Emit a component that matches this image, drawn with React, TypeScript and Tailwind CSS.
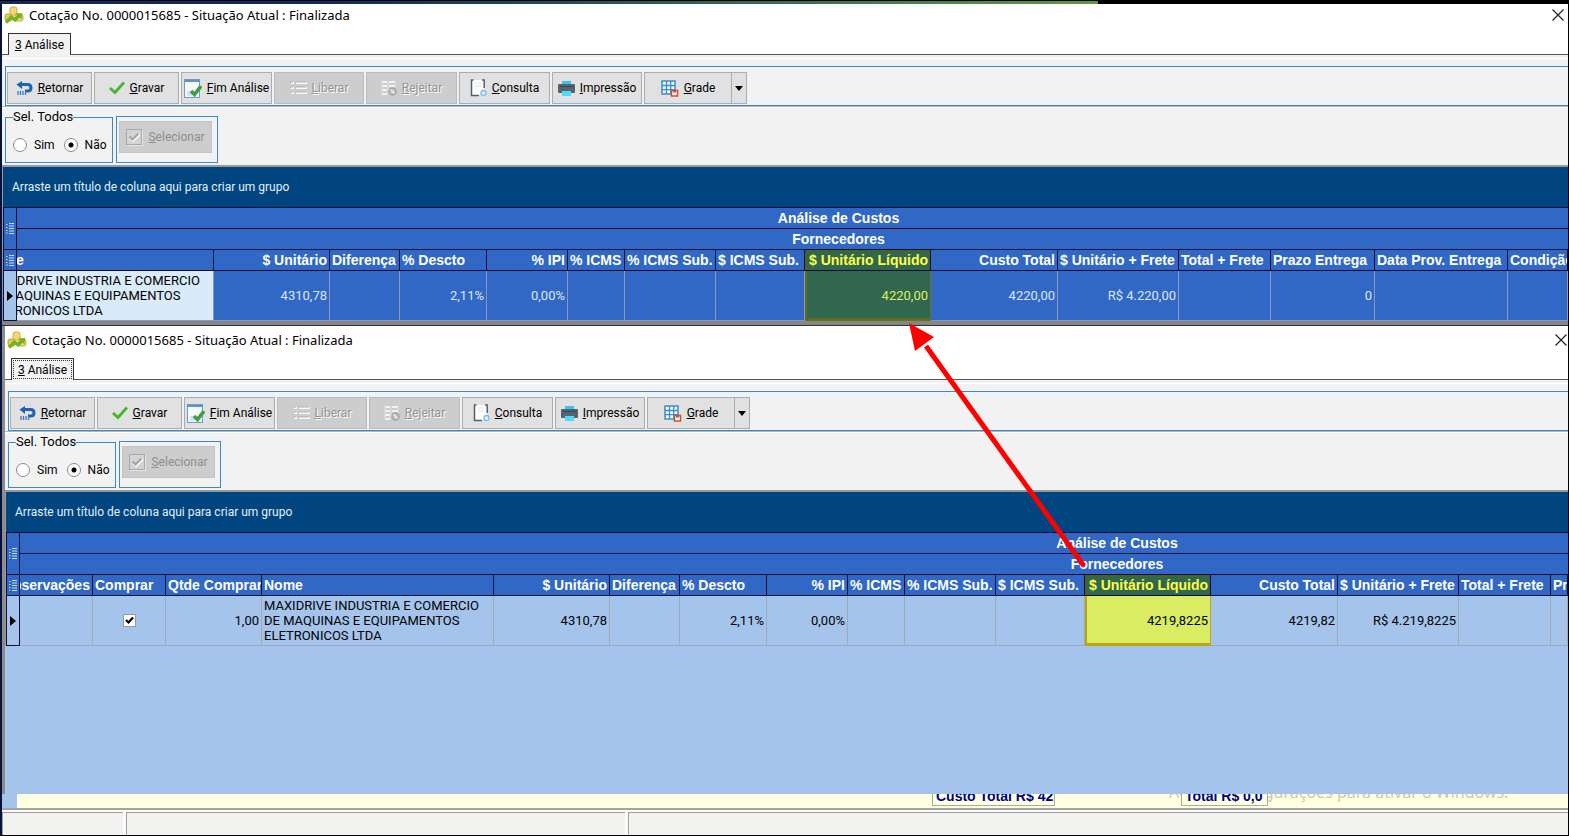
import type { ReactNode } from 'react'

const COMPANY = ['MAXIDRIVE INDUSTRIA E COMERCIO', 'DE MAQUINAS E EQUIPAMENTOS', 'ELETRONICOS LTDA']

/* ---------- Icons ---------- */

const AppIcon = () => (
  <svg width="20" height="20" viewBox="0 0 20 20" className="mt-px">
    <rect x="6" y="2" width="7" height="8" rx="2" fill="#f0d873" stroke="#cdaa48" />
    <rect x="1" y="9" width="7" height="7" rx="2" fill="#e6c75c" stroke="#c4a23c" />
    <rect x="11" y="9" width="8" height="7" rx="2" fill="#f0d873" stroke="#cdaa48" />
    <path d="M2 17.500L7.500 12L11 15L15 10.500" fill="none" stroke="#74b41e" strokeWidth="3.400" strokeLinejoin="round" />
    <path d="M11.500 8.500L18 8L17.500 14.500Z" fill="#74b41e" />
  </svg>
)

const CloseIcon = () => (
  <svg width="12" height="12" viewBox="0 0 12 12">
    <path d="M0.500 0.500L11.500 11.500M11.500 0.500L0.500 11.500" stroke="#222" strokeWidth="1.200" />
  </svg>
)

const BackIcon = () => (
  <svg width="17" height="14" viewBox="0 0 17 14">
    <path d="M4 3.500H11.500Q15 3.500 15 7Q15 10 11.500 10H9" fill="none" stroke="#1f62b4" strokeWidth="3" />
    <path d="M6 0L0.500 3.500L6 8Z" fill="#1f62b4" />
    <path d="M2 10V14M4.500 10V14M7 10V14M9.500 10V14" stroke="#3c79c4" strokeWidth="1.300" />
  </svg>
)

const CheckIcon = () => (
  <svg width="16" height="14" viewBox="0 0 16 14">
    <path d="M1 7L6 11.500L15 1.500" fill="none" stroke="#45b52c" strokeWidth="2.800" />
  </svg>
)

const FinishIcon = () => (
  <svg width="18" height="19" viewBox="0 0 18 19">
    <rect x="0.500" y="0.500" width="15" height="18" fill="#f5f9fd" stroke="#6d9ccc" />
    <rect x="1" y="1" width="14" height="2" fill="#5b94d0" />
    <path d="M3 12H8V17H3Z" fill="#d3e1f0" />
    <path d="M7 12L10.500 15.500L17 7" fill="none" stroke="#3f9d45" strokeWidth="3.600" />
  </svg>
)

const ListIcon = () => (
  <svg width="17" height="14" viewBox="0 0 17 14">
    <path d="M1 2H4M6 2H17M1 7H4M6 7H17M1 12H4M6 12H17" stroke="#fafafa" strokeWidth="2.200" />
    <path d="M0 1H3M5 1H16M0 6H3M5 6H16M0 11H3M5 11H16" stroke="#b2b2b2" />
  </svg>
)

const RejectIcon = () => (
  <svg width="16" height="16" viewBox="0 0 16 16">
    <path d="M1 2H6M8 2H14M1 6H6M8 6H14M1 10H6M1 14H6" stroke="#f2f2f2" strokeWidth="2" />
    <path d="M1 1V14M7 1V14M14 1V8" stroke="#e2e2e2" />
    <circle cx="11.500" cy="11.500" r="3.500" fill="#c4c4c4" stroke="#a4a4a4" strokeWidth="1.500" />
    <path d="M9.500 9.500L13.500 13.500" stroke="#eee" strokeWidth="1.300" />
  </svg>
)

const PageIcon = () => (
  <svg width="17" height="18" viewBox="0 0 17 18">
    <path d="M1.500 1H14V11L9 16.500H1.500Z" fill="#fdfdfd" />
    <path d="M3.500 1H1.500V16.500H9M12 1H14.200V9" fill="none" stroke="#55606a" strokeWidth="1.500" />
    <path d="M5 4H11M5 7H11" stroke="#dfe8f2" />
    <circle cx="13.500" cy="14" r="2.500" fill="#e4f2fc" stroke="#7dbcec" strokeWidth="1.300" />
  </svg>
)

const PrinterIcon = () => (
  <svg width="17" height="15" viewBox="0 0 17 15">
    <rect x="4" y="0" width="9" height="4" fill="#35c8ef" />
    <rect x="0" y="3" width="17" height="9" rx="1" fill="#53636f" />
    <rect x="2" y="5" width="13" height="1" fill="#3b4852" />
    <rect x="4" y="10" width="9" height="5" fill="#4fdcfa" />
  </svg>
)

const GridIcon = () => (
  <svg width="18" height="17" viewBox="0 0 18 17">
    <rect x="1" y="1" width="13" height="13" fill="#f4faff" stroke="#3b8ccc" strokeWidth="1.500" />
    <path d="M5.500 1V14M9.700 1V14M1 5.500H14M1 9.700H14" stroke="#3b8ccc" strokeWidth="1.300" />
    <rect x="10.500" y="10.500" width="6" height="5.500" fill="#fff" stroke="#cf4d2c" strokeWidth="1.500" />
    <rect x="12" y="10" width="3" height="2.500" fill="#cf4d2c" />
  </svg>
)

const TickBoxIcon = () => (
  <svg width="17" height="17" viewBox="0 0 17 17">
    <path d="M1 17H17V1" fill="none" stroke="#fff" />
    <rect x="0.500" y="0.500" width="15" height="15" fill="#d4d4d4" stroke="#a9a9a9" />
    <path d="M4 8.500L7 11.500L13.500 5" fill="none" stroke="#fff" strokeWidth="2.500" />
    <path d="M3.500 7.500L6.500 10.500L12.500 4.500" fill="none" stroke="#a4a4a4" strokeWidth="2.200" />
  </svg>
)

const ColumnsIcon = () => (
  <svg width="8" height="11" viewBox="0 0 8 11" className="mx-auto">
    <path d="M0 1.500H1.500M0 4.500H1.500M0 7.500H1.500M0 10H1.500" stroke="#c9dcf5" />
    <path d="M3 0.500H8M3 3H8M3 5.500H8M3 8H8M3 10.500H8" stroke="#c9dcf5" strokeWidth="1.200" />
  </svg>
)

/* ---------- Toolbar ---------- */

type ToolProps = { icon: ReactNode; hotkey: string; label: string; width: string; disabled?: boolean }

const tools: ToolProps[] = [
  { icon: <BackIcon />, hotkey: 'R', label: 'etornar', width: 'w-[85px]' },
  { icon: <CheckIcon />, hotkey: 'G', label: 'ravar', width: 'w-[85px]' },
  { icon: <FinishIcon />, hotkey: 'F', label: 'im Análise', width: 'w-[91px]' },
  { icon: <ListIcon />, hotkey: 'L', label: 'iberar', width: 'w-[90px]', disabled: true },
  { icon: <RejectIcon />, hotkey: 'R', label: 'ejeitar', width: 'w-[91px]', disabled: true },
  { icon: <PageIcon />, hotkey: 'C', label: 'onsulta', width: 'w-[91px]' },
  { icon: <PrinterIcon />, hotkey: 'I', label: 'mpressão', width: 'w-[90px]' },
  { icon: <GridIcon />, hotkey: 'G', label: 'rade', width: 'w-[88px]' },
]

const ToolButton = ({ icon, hotkey, label, width, disabled }: ToolProps) => (
  <button
    disabled={disabled}
    className={`${width} flex h-8 shrink-0 items-center justify-center gap-[5px] whitespace-nowrap border ${
      disabled
        ? 'border-[#bcbcbc] bg-[#cdcdcd] text-[#939393] [text-shadow:1px_1px_0_#fff]'
        : 'border-[#adadad] bg-[#e1e1e1] text-black'
    }`}
  >
    {icon}
    <span><u>{hotkey}</u>{label}</span>
  </button>
)

const Toolbar = () => (
  <div className="ml-[3px] flex h-10 items-center gap-[2px] overflow-hidden border border-r-0 border-[#3c8ac4] pl-px pt-1 text-xs">
    {tools.map((tool) => <ToolButton key={tool.label} {...tool} />)}
    <button aria-label="Opções da grade" className="-ml-[3px] flex h-8 w-4 shrink-0 items-center justify-center border border-[#adadad] bg-[#e1e1e1]">
      <svg width="8" height="5" viewBox="0 0 8 5"><path d="M0 0H8L4 5Z" /></svg>
    </button>
  </div>
)

const radioClass =
  'h-[14px] w-[14px] appearance-none rounded-full border border-[#8a8a8a] bg-white checked:bg-[radial-gradient(circle,#000_2px,#fff_3px)]'

const Options = ({ name }: { name: string }) => (
  <div className="flex h-[57px] items-start gap-[3px] pl-[3px] pt-px">
    <fieldset className="h-[54px] w-[108px] border border-[#3c8ac4] pl-[7px]">
      <legend className="h-4 leading-4">Sel. Todos</legend>
      <div className="flex items-center gap-[7px] pt-3 text-xs leading-4">
        <input id={`${name}-sim`} type="radio" name={name} className={radioClass} />
        <label htmlFor={`${name}-sim`} className="mr-[2px]">Sim</label>
        <input id={`${name}-nao`} type="radio" name={name} defaultChecked className={radioClass} />
        <label htmlFor={`${name}-nao`}>Não</label>
      </div>
    </fieldset>
    <div className="mt-[7px] h-[47px] w-[102px] border border-[#3c8ac4] pl-[2px] pt-1 text-xs">
      <button disabled className="flex h-8 w-[93px] items-center justify-center gap-[5px] border border-[#c4c4c4] bg-[#cdcdcd] text-[#8d8d8d]">
        <TickBoxIcon />
        <span><u>S</u>elecionar</span>
      </button>
    </div>
  </div>
)

/* ---------- Cost grid ---------- */

type Column = { title: string; width?: string; value?: ReactNode; right?: boolean; clip?: string; mark?: boolean }

const Company = () => <>{COMPANY.map((line) => <div key={line}>{line}</div>)}</>

const BuyCheckbox = () => (
  <span className="relative mx-auto block h-[13px] w-[13px]">
    <input
      type="checkbox"
      aria-label="Comprar"
      defaultChecked
      className="peer block h-full w-full appearance-none border border-[#999] bg-white"
    />
    <svg viewBox="0 0 13 13" className="pointer-events-none absolute inset-0 hidden peer-checked:block">
      <path d="M3 6L5.500 8.500L10 3.500" fill="none" stroke="#000" strokeWidth="2.200" />
    </svg>
  </span>
)

const costColumns = (net: string, total: string, withFreight: string): Column[] => [
  { title: '$ Unitário', width: 'w-[116px]', value: '4310,78', right: true },
  { title: 'Diferença', width: 'w-[70px]' },
  { title: '% Descto', width: 'w-[87px]', value: '2,11%' },
  { title: '% IPI', width: 'w-[81px]', value: '0,00%', right: true },
  { title: '% ICMS', width: 'w-[57px]' },
  { title: '% ICMS Sub.', width: 'w-[91px]' },
  { title: '$ ICMS Sub.', width: 'w-[89px]' },
  { title: '$ Unitário Líquido', width: 'w-[126px]', value: net, right: true, mark: true },
  { title: 'Custo Total', width: 'w-[127px]', value: total, right: true },
  { title: '$ Unitário + Frete', width: 'w-[121px]', value: withFreight },
  { title: 'Total + Frete', width: 'w-[92px]' },
]

const firstColumns: Column[] = [
  { title: 'Nome', width: 'w-[197px]', value: <Company />, clip: '-ml-[34px]' },
  ...costColumns('4220,00', '4220,00', 'R$ 4.220,00'),
  { title: 'Prazo Entrega', width: 'w-[104px]', value: '0' },
  { title: 'Data Prov. Entrega', width: 'w-[133px]' },
  { title: 'Condição' },
]

const secondColumns: Column[] = [
  { title: 'Observações', width: 'w-[73px]', clip: '-ml-5' },
  { title: 'Comprar', width: 'w-[73px]', value: <BuyCheckbox /> },
  { title: 'Qtde Comprar', width: 'w-[96px]', value: '1,00', right: true },
  { title: 'Nome', width: 'w-[232px]', value: <Company /> },
  ...costColumns('4219,8225', '4219,82', 'R$ 4.219,8225'),
  { title: 'Prazo Entrega' },
]

type GridProps = { columns: Column[]; selected?: boolean; bandOffset: string }

const CostGrid = ({ columns, selected, bandOffset }: GridProps) => {
  const cellTone = (column: Column) => {
    if (column.mark) {
      return selected
        ? 'border-[#6f7413] bg-[#32674f] text-[#dcf060] shadow-[inset_2px_-2px_0_#5f6c1c]'
        : 'border-[#bfa50f] bg-[#d9ec62] text-black shadow-[inset_2px_-2px_0_#bfa50f]'
    }
    if (!selected) return 'border-[#9ea9ba] bg-[#a5c4eb] text-black'
    return column.title === 'Nome' ? 'border-[#8898b8] bg-[#d9eaf9] text-black' : 'border-[#8898b8] bg-[#3168c5] text-[#dbe8fa]'
  }

  return (
    <table className="w-full table-fixed border-separate border-spacing-0 border-l border-t border-[#0b1034]">
      <colgroup>
        <col className="w-[13px]" />
        {columns.map((column, i) => <col key={i} className={column.width} />)}
      </colgroup>
      <thead className="bg-[#3168c5] font-['Liberation_Sans',sans-serif] text-sm leading-5 text-white">
        <tr className="h-[21px]">
          <th rowSpan={2} className="border-b border-r border-[#0b1034] p-0"><ColumnsIcon /></th>
          <th colSpan={columns.length} className={`${bandOffset} border-b border-[#0b1034] py-0 pr-0`}>Análise de Custos</th>
        </tr>
        <tr className="h-[21px]">
          <th colSpan={columns.length} className={`${bandOffset} border-b border-[#0b1034] py-0 pr-0`}>Fornecedores</th>
        </tr>
        <tr className="h-[21px]">
          <th className="border-b border-r border-[#0b1034] p-0"><ColumnsIcon /></th>
          {columns.map((column, i) => (
            <th
              key={i}
              className={`overflow-hidden whitespace-nowrap border-b border-r border-[#0b1034] px-[2px] py-0 ${
                column.right ? 'text-right' : 'text-left'
              } ${column.mark ? 'bg-[#32674f] text-[#ffff45] shadow-[inset_2px_2px_0_#46632a]' : ''}`}
            >
              <div className={column.clip}>{column.title}</div>
            </th>
          ))}
        </tr>
      </thead>
      <tbody>
        <tr className="h-[50px]">
          <td className="border-b border-r border-[#0b1034] bg-[#a5c4eb] p-0">
            <svg width="6" height="10" viewBox="0 0 6 10" className="mx-auto"><path d="M0 0L6 5L0 10Z" /></svg>
          </td>
          {columns.map((column, i) => (
            <td
              key={i}
              className={`overflow-hidden whitespace-nowrap border-b border-r px-[2px] py-0 leading-[15px] ${
                column.title === 'Nome' ? 'text-left' : 'text-right'
              } ${cellTone(column)}`}
            >
              <div className={column.clip}>{column.value}</div>
            </td>
          ))}
        </tr>
      </tbody>
    </table>
  )
}

/* ---------- Window ---------- */

type WindowProps = GridProps & { name: string; focused?: boolean }

const QuoteWindow = ({ name, focused, ...grid }: WindowProps) => (
  <section className="bg-[#f2f2f2]">
    <header className="bg-white">
      <div className={`flex h-[29px] items-start pl-[2px] ${focused ? 'box-content pr-px pt-[3px]' : 'pr-1'}`}>
        <AppIcon />
        <h1 className="flex-1 pl-[5px] font-['Noto_Sans',sans-serif] text-[13px] font-normal leading-[22px]">
          Cotação No. 0000015685 - Situação Atual : Finalizada
        </h1>
        <button aria-label="Fechar" className="pt-[5px]"><CloseIcon /></button>
      </div>
      <div className="flex h-[22px]">
        <div className="w-[6px] border-b border-[#555]" />
        <button className="w-[63px] border border-b-0 border-[#333] bg-[#f2f2f2] p-px text-xs">
          <span className={`flex h-full items-center justify-center whitespace-pre border border-dotted ${focused ? 'border-[#333]' : 'border-transparent'}`}>
            <u>3</u> Análise
          </span>
        </button>
        <div className="flex-1 border-b border-[#555]" />
      </div>
    </header>
    <div className="mb-[7px] mt-[3px] h-px bg-white" />
    <Toolbar />
    <div className="h-[2px] border-b border-white bg-[#b5b5b5]" />
    <Options name={name} />
    <div className="border-l border-t-2 border-[#999]">
      <p className="flex h-10 items-center bg-[#004480] pl-[9px] text-xs text-[#e3f0fb]">
        Arraste um título de coluna aqui para criar um grupo
      </p>
      <CostGrid {...grid} />
    </div>
  </section>
)

const totalClass =
  "absolute -top-2 h-5 overflow-hidden whitespace-nowrap border border-[#aaa] bg-[#ffffe1] pl-[3px] font-['Liberation_Sans',sans-serif] text-sm font-bold leading-[18px] text-[#000080]"

const App = () => (
  <main className="relative flex min-h-screen flex-col overflow-hidden bg-black pb-px pr-px pt-px font-[Roboto,'Liberation_Sans',sans-serif] text-[13px] text-black">
    <div className="h-[3px] w-[70%] bg-linear-to-r from-[#0d2c5c] from-30% to-[#5f9a3c]" />
    <div className="flex flex-1 flex-col border-l-2 border-[#08133c]">
      <QuoteWindow name="todos-1" columns={firstColumns} selected bandOffset="pl-[92px]" />
      <div className="h-[5px] border-b border-[#333] bg-[#858585]" />
      <div className="flex flex-1 flex-col border-l-[3px] border-[#8c8c8c] bg-[#a5c4eb]">
        <QuoteWindow name="todos-2" columns={secondColumns} focused bandOffset="pl-[646px]" />
      </div>

      <div className="flex bg-[#a5c4eb] pl-[15px]">
        <div className="relative h-[14px] flex-1 overflow-hidden bg-[#ffffe1]">
          <span className="absolute -top-3 left-[1152px] whitespace-nowrap font-['Noto_Sans',sans-serif] text-base leading-5 text-[#c9c9b8]">
            Acesse Configurações para ativar o Windows.
          </span>
          <output className={`${totalClass} left-[915px] w-[123px]`}>Custo Total R$ 42</output>
          <output className={`${totalClass} left-[1164px] w-[87px]`}>Total R$ 0,0</output>
        </div>
      </div>
      <footer className="flex h-[27px] gap-[3px] border-t-2 border-[#a5a5a0] bg-[#fafafa] pt-[2px]">
        <div className="w-[121px] border-l border-t border-[#a0a0a0] bg-[#f2f2f0]" />
        <div className="w-[499px] border-l border-t border-[#a0a0a0] bg-[#f2f2f0]" />
        <div className="flex-1 border-l border-t border-[#a0a0a0] bg-[#f2f2f0]" />
      </footer>
    </div>

    {/* Arrow from the new net price to the rounded one */}
    <svg width="180" height="246" viewBox="0 0 180 246" className="pointer-events-none absolute left-[908px] top-[322px]">
      <path d="M176 244L18 24" stroke="#f00" strokeWidth="5" />
      <path d="M1 1L26 15L7 29Z" fill="#f00" />
    </svg>
  </main>
)

export default App
